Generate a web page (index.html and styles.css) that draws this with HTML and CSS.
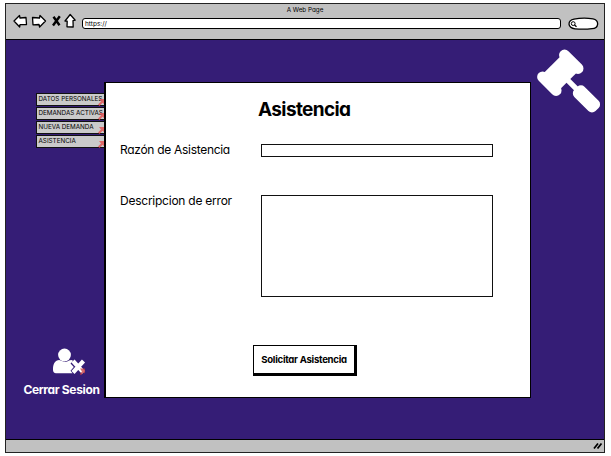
FILE: index.html
```html
<!DOCTYPE html>
<html lang="es">
<head>
<meta charset="utf-8">
<title>A Web Page</title>
<link rel="stylesheet" href="styles.css">
</head>
<body>
<div class="window">
  <header class="chrome">
    <div class="title">A Web Page</div>
    <div class="toolbar">
      <svg class="nav" width="64" height="16" viewBox="0 0 64 16" fill="#fff" stroke="#000" stroke-width="1.3" stroke-linejoin="round">
        <path d="M1 8 6.500 2.500 7 5l6-.5.5 7-6.500.2-.3 2.300z"/>
        <path d="M32.500 8 27 2.500 26.500 5 19.500 4.500l.5 7.300 6-.3.600 2.500z"/>
        <path d="m40.500 3.800 6 8.400M46.800 3.300 40 12.500" stroke-width="2.400"/>
        <path d="m57.200 1.500 5 5.700-2.200.5.200 6.300-6.200-.2.200-5.600L52 8z"/>
      </svg>
      <div class="address">https://</div>
      <div class="search">
        <svg width="31" height="14" viewBox="0 0 31 14" fill="none" stroke="#000">
          <path d="M6 2.200Q15 .2 25 1.800q5 1 4.600 5.500-.5 4-5.600 4.300-8 1-17 .2-5.500-.5-6-4.600Q1 3.200 6 2.200z" fill="#fff" stroke-width="1.300"/>
          <circle cx="5.200" cy="6.600" r="1.900"/><path d="m6.500 8 2 1.700" stroke-width="1.300"/>
        </svg>
      </div>
    </div>
  </header>

  <main class="page">
    <aside class="sidebar">
      <nav class="menu">
        <a><span>DATOS PERSONALES</span><svg class="mark" viewBox="0 0 6 7"><path d="M1 0h5v5L4.500 3.800 1.500 7 0 5.500 3 2.400z"/></svg></a>
        <a><span>DEMANDAS ACTIVAS</span><svg class="mark" viewBox="0 0 6 7"><path d="M1 0h5v5L4.500 3.800 1.500 7 0 5.500 3 2.400z"/></svg></a>
        <a><span>NUEVA DEMANDA</span><svg class="mark" viewBox="0 0 6 7"><path d="M1 0h5v5L4.500 3.800 1.500 7 0 5.500 3 2.400z"/></svg></a>
        <a><span>ASISTENCIA</span><svg class="mark" viewBox="0 0 6 7"><path d="M1 0h5v5L4.500 3.800 1.500 7 0 5.500 3 2.400z"/></svg></a>
      </nav>
      <div class="logout">
        <svg width="36" height="28" viewBox="0 0 36 28">
          <path d="M4 12.500Q6 11.500 8 12.500q4.500 2.800 8 0 3-1 4 .500l-2.500 2.500 3.300 3.500-3.300 3.700 2 2.500H3Q0 25 0 22c0-4 .5-7.500 4-9.500z" fill="#fff"/>
          <circle cx="11.500" cy="7" r="6.400" fill="#fff"/>
          <path d="m20 13 10.500 11.500M30.500 13 20 24.500" stroke="#fff" stroke-width="4.200"/>
          <path d="M27 20.500h5v5l-1.500-1-2.500 2.800-1.300-1.400 2.300-2.400z" fill="#c93c3c" fill-opacity=".75"/>
        </svg>
        <span>Cerrar Sesion</span>
      </div>
    </aside>

    <section class="card">
      <h1>Asistencia</h1>
      <div class="row">
        <label>Razón de Asistencia</label>
        <div class="field"></div>
      </div>
      <div class="row tall">
        <label class="wide">Descripcion de error</label>
        <div class="field area"></div>
      </div>
      <div class="button"><span>Solicitar Asistencia</span></div>
    </section>

    <svg class="gavel" width="66" height="66" viewBox="0 0 66 66" fill="#fff">
      <g transform="translate(24.300 24.700) rotate(-45)">
        <rect x="-13" y="-11.500" width="26" height="23"/>
        <rect x="-21" y="-15" width="11" height="30" rx="5.500"/>
        <rect x="10" y="-15" width="11" height="30" rx="5.500"/>
        <rect x="-2.700" y="9" width="5.400" height="17"/>
        <rect x="-7.200" y="22" width="14.400" height="30" rx="5"/>
      </g>
    </svg>
  </main>

  <footer class="status">
    <svg width="10" height="8" viewBox="0 0 10 8" stroke="#000" stroke-width="1.800"><path d="M1 6.500 5 1.500M4.500 6.500l4-5"/></svg>
  </footer>
</div>
</body>
</html>
```
FILE: styles.css
```css
* { box-sizing: border-box; }
body {
  margin: 0;
  padding: 3px 0 0 5px;
  background: #fff;
  color: #000;
  font-family: Inter, "Liberation Sans", sans-serif;
  font-feature-settings: "cv11";
}
.window {
  display: grid;
  grid-template-rows: 35px 401px 12px;
  width: 600px;
  height: 450px;
  border: 1px solid #222;
  background: #c1c1c1;
}
.title {
  height: 11px;
  text-align: center;
  font-size: 6.3px;
  line-height: 13px;
}
.toolbar { display: flex; align-items: flex-start; }
.nav { margin: -2px 0 0 7px; }
.address {
  width: 479px;
  height: 11px;
  margin: 3px 0 0 5px;
  padding-left: 2px;
  border: 1px solid #000;
  border-radius: 3px;
  background: #fff;
  font-size: 6.5px;
  line-height: 10px;
}
.search { margin: 2px 0 0 7px; line-height: 0; }
.page {
  display: grid;
  grid-template-columns: 99px 427px 1fr;
  border-top: 1px solid #000;
  border-bottom: 1px solid #000;
  background: #351d76;
}
.sidebar {
  display: flex;
  flex-direction: column;
  justify-content: space-between;
  padding: 53px 0 40px;
}
.menu { display: grid; gap: 1px; margin-left: 30px; }
.menu a {
  display: flex;
  justify-content: space-between;
  height: 13px;
  padding-left: 1.500px;
  border: 1px solid #111;
  border-right: 0;
  background: #cacaca;
  font-size: 6.300px;
  line-height: 11px;
  white-space: nowrap;
}
.mark { flex: none; width: 6px; height: 7px; margin: 5px 1px 0 -7px; fill: #e35757; opacity: .85; }
.logout {
  display: flex;
  flex-direction: column;
  align-items: center;
  gap: 5px;
  padding-left: 12px;
  color: #fff;
  font-size: 12px;
  line-height: 18px;
  letter-spacing: -.35px;
  font-weight: 700;
  white-space: nowrap;
}
.logout svg { margin-left: 18px; }
.card {
  align-self: start;
  width: 427px;
  height: 316px;
  margin: 42px 0 0 -1px;
  padding: 13px 0 0 14px;
  border: 1px solid #000;
  border-width: 1px 1px 1px 2px;
  background: #fff;
}
h1 {
  margin: 0 0 0 138px;
  font-size: 19px;
  line-height: 28px;
  height: 48px;
  letter-spacing: -.62px;
}
.row { display: grid; grid-template-columns: 141px 232px; height: 51px; }
.row.tall { height: 150px; }
label { font-size: 12px; line-height: 11px; letter-spacing: -.3px; white-space: nowrap; }
.wide { letter-spacing: -.24px; }
.field { height: 13px; border: 1px solid #111; }
.area { height: 102px; }
.button {
  width: 104px;
  height: 31px;
  margin-left: 133px;
  border: 1px solid #000;
  border-width: 1px 3px 3px 1px;
  font-size: 9.600px;
  letter-spacing: -.28px;
  line-height: 27px;
  font-weight: 700;
  text-align: center;
  white-space: nowrap;
}
.gavel { margin: 8px 0 0 4px; }
.status { display: flex; justify-content: flex-end; padding: 2px 1px 0 0; }
```
